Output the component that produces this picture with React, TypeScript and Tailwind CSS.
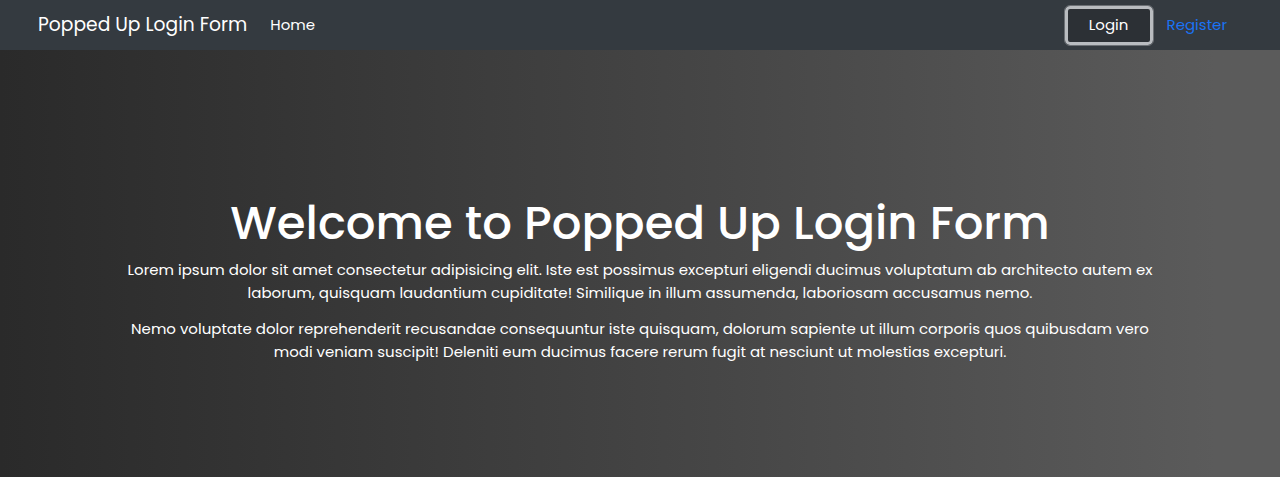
import React from "react";

const font = { fontFamily: "Poppins, 'Open Sans', 'Noto Sans', sans-serif" };

const Navbar = () => (
  <nav className="flex h-[50px] items-center bg-[#343a40] pl-[38px] pr-[53px]">
    <a href="#" className="mr-[23px] text-[18.7px] text-white">
      Popped Up Login Form
    </a>
    <a href="#" className="text-[15px] text-white">
      Home
    </a>
    <div className="ml-auto flex items-center gap-[14px]">
      <button className="flex h-[39px] w-[88px] items-center justify-center rounded-[5px] border-[3px] border-[#b9bcc0] bg-[#2c3035] text-[15px] text-white outline outline-1 outline-[#6c7075]">
        Login
      </button>
      <a href="#" className="text-[15px] text-[#1a73f5]">
        Register
      </a>
    </div>
  </nav>
);

export default function App() {
  return (
    <div style={font}>
      <Navbar />
      <section className="flex h-screen items-center justify-center bg-gradient-to-r from-[#2a2a2a] to-[#5b5b5b] to-95% pb-[9px] text-white">
        <div className="w-[1050px] text-center">
          <h1 className="mb-[6px] text-[46.6px] font-medium leading-[58px]">
            Welcome to Popped Up Login Form
          </h1>
          <p className="mb-[13px] text-[15px] leading-[23px]">
            Lorem ipsum dolor sit amet consectetur adipisicing elit. Iste est possimus excepturi eligendi ducimus
            voluptatum ab architecto autem ex laborum, quisquam laudantium cupiditate! Similique in illum assumenda,
            laboriosam accusamus nemo.
          </p>
          <p className="mb-[12px] text-[15px] leading-[23px]">
            Nemo voluptate dolor reprehenderit recusandae consequuntur iste quisquam, dolorum sapiente ut illum
            corporis quos quibusdam vero modi veniam suscipit! Deleniti eum ducimus facere rerum fugit at nesciunt ut
            molestias excepturi.
          </p>
        </div>
      </section>
    </div>
  );
}
